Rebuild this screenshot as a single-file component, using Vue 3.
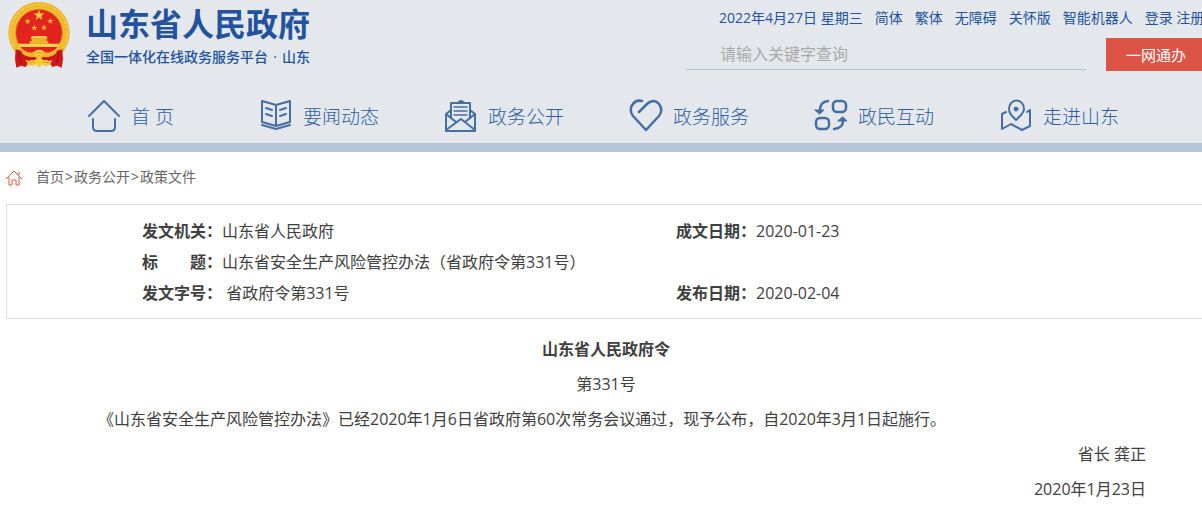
<template>
  <div class="page">
    <header class="header">
      <div class="header-top">
        <a class="brand" href="#">
          <svg class="emblem" viewBox="24 6 184 198" aria-hidden="true">
            <circle cx="116" cy="98" r="92" fill="#eab32a" />
            <circle cx="116" cy="98" r="85" fill="none" stroke="#f5c83c" stroke-width="7" stroke-dasharray="14 3" />
            <circle cx="116" cy="98" r="75" fill="none" stroke="#f2c034" stroke-width="5" />
            <circle cx="116" cy="98" r="70" fill="#e4231f" stroke="#d59a20" stroke-width="2" />
            <path d="M46 148 L78 156 L92 178 L76 201 L62 197 L48 203 L44 178 Z" fill="#d0181c" />
            <path d="M186 148 L154 156 L140 178 L156 201 L170 197 L184 203 L188 178 Z" fill="#d0181c" />
            <path d="M54 156 L64 190 M178 156 L168 190" stroke="#b01015" stroke-width="4" />
            <path :d="star(116, 46, 17)" fill="#f9cf3a" />
            <path v-for="s in smallStars" :key="s[0]" :d="star(s[0], s[1], 10)" fill="#f0b832" />
            <path d="M95 108 H138 L142 116 H91 Z" fill="#f7cd45" />
            <path d="M94 117 H139 V123 H144 V131 H88 V123 H94 Z" fill="#edb42e" />
            <path d="M55 131 H177 L173 141 H59 Z" fill="#fbd750" />
            <path d="M61 142 H171 L161 154 H71 Z" fill="#e4231f" />
            <path d="M58 140 Q78 160 98 157 Q105 149 116 150 Q127 149 134 157 Q154 160 174 140 L167 160 Q146 178 132 168 L116 173 L100 168 Q86 178 65 160 Z" fill="#efb72b" />
            <path d="M77 168 Q96 176 108 168 H124 Q136 176 155 168 L147 180 H85 Z" fill="#c9151b" />
            <circle cx="116" cy="163" r="14" fill="#f9cd3b" />
            <path d="M103 164 Q116 151 129 164 M107 172 Q116 162 125 172" fill="none" stroke="#c98516" stroke-width="2" />
            <path d="M76 179 Q96 188 108 176 H124 Q136 188 156 179 L149 195 Q132 202 124 192 L120 201 H112 L108 192 Q100 202 83 195 Z" fill="#f7c934" />
            <path d="M84 189 L104 186 M148 189 L128 186" stroke="#d48d18" stroke-width="2" />
          </svg>
          <span class="brand-text">
            <strong class="brand-name">山东省人民政府</strong>
            <span class="brand-sub"><span>全国一体化在线政务服务平台</span><span>·</span><span>山东</span></span>
          </span>
        </a>
        <div class="tools">
          <div class="top-links">
            <span>2022年4月27日 星期三</span>
            <a v-for="link in topLinks" :key="link" href="#">{{ link }}</a>
            <span><a href="#">登录</a> <a href="#">注册</a></span>
          </div>
          <form class="search" @submit.prevent>
            <input v-model="keyword" type="text" placeholder="请输入关键字查询" aria-label="请输入关键字查询" />
            <button type="button">一网通办</button>
          </form>
        </div>
      </div>

      <nav class="nav">
        <a v-for="item in navItems" :key="item.icon" class="nav-item" href="#">
          <svg class="nav-icon" viewBox="0 0 34 34" aria-hidden="true">
            <g v-if="item.icon === 'home'">
              <path d="M2 17 L17 2 L32 17" />
              <path d="M6 20 V28 Q6 32 10 32 H24 Q28 32 28 28 V20" />
            </g>
            <g v-else-if="item.icon === 'book'">
              <path d="M17 6 L3 2 V23 L17 27 L31 23 V2 Z M17 6 V27" />
              <path d="M3 26 L17 30 L31 26" />
              <path d="M7 9 L13 11 M7 15 L13 17 M21 11 L27 9 M21 17 L27 15" />
            </g>
            <g v-else-if="item.icon === 'mail'">
              <path d="M7 19 V4 H26 V19 M15 3 L17 2 L19 3" />
              <path d="M7 11 L2 15 V32 H31 V15 L26 11" />
              <path d="M2 15 L12 23 M31 15 L21 23 M2 31 L17 20 L31 31" />
              <path class="thin" d="M10 8 H23 M10 12 H23 M10 16 H23" />
            </g>
            <g v-else-if="item.icon === 'heart'" class="bold">
              <path d="M10 13 L18 5 C22 1 27 1 30 5 C33 9 33 13 30 17 L17 31 L4 17 C1 13 1 8 4 5 C6 2 9 1 13 2" />
            </g>
            <g v-else-if="item.icon === 'swap'" class="bold">
              <rect x="19" y="2" width="13" height="11" rx="4" />
              <rect x="2" y="19" width="13" height="11" rx="4" />
              <path d="M14 2 Q6 3 6 11 M20 30 Q29 29 29 22" />
              <path class="solid" d="M1 11 H10 L6 15 Z M24 22 H33 L29 18 Z" />
            </g>
            <g v-else>
              <path d="M17 21 C12 16 10 14 10 10 A7 8 0 0 1 25 10 C25 14 22 16 17 21 Z" />
              <circle class="solid" cx="17" cy="10" r="2" />
              <path d="M7 13 L3 15 V30 L12 25 L23 31 L31 27 V11 L28 13" />
            </g>
          </svg>
          <span>{{ item.label }}</span>
        </a>
      </nav>
    </header>

    <main class="main">
      <div class="crumbs">
        <svg class="crumb-icon" viewBox="0 0 16 16" aria-hidden="true">
          <path d="M0 9 L8 1 L16 9 M3 7 V15 H6 V10 H10 V15 H13 V7 M13 5 V2" />
        </svg>
        <div class="crumb-list"><a href="#">首页</a><span>&gt;</span><a href="#">政务公开</a><span>&gt;</span><a href="#">政策文件</a></div>
      </div>

      <div class="info">
        <table>
          <tbody>
            <tr>
              <th scope="row">发文机关：</th>
              <td class="wide">山东省人民政府</td>
              <th scope="row">成文日期：</th>
              <td>2020-01-23</td>
            </tr>
            <tr>
              <th scope="row">标　　题：</th>
              <td colspan="3">山东省安全生产风险管控办法（省政府令第331号）</td>
            </tr>
            <tr>
              <th scope="row">发文字号：</th>
              <td class="wide">&nbsp;省政府令第331号</td>
              <th scope="row">发布日期：</th>
              <td>2020-02-04</td>
            </tr>
          </tbody>
        </table>
      </div>

      <article class="article">
        <h1>山东省人民政府令</h1>
        <p class="center">第331号</p>
        <p class="indent">《山东省安全生产风险管控办法》已经2020年1月6日省政府第60次常务会议通过，现予公布，自2020年3月1日起施行。</p>
        <p class="right">省长 龚正</p>
        <p class="right">2020年1月23日</p>
      </article>
    </main>
  </div>
</template>

<script setup>
import { ref } from 'vue'

const keyword = ref('')

const topLinks = ['简体', '繁体', '无障碍', '关怀版', '智能机器人']

const navItems = [
  { icon: 'home', label: '首 页' },
  { icon: 'book', label: '要闻动态' },
  { icon: 'mail', label: '政务公开' },
  { icon: 'heart', label: '政务服务' },
  { icon: 'swap', label: '政民互动' },
  { icon: 'map', label: '走进山东' }
]

const smallStars = [[82, 64], [150, 63], [102, 84], [131, 83]]

// five-pointed star path around (cx, cy)
function star(cx, cy, r) {
  const points = []
  for (let i = 0; i < 10; i++) {
    const radius = i % 2 ? r * 0.4 : r
    const angle = (Math.PI / 5) * i - Math.PI / 2
    points.push(`${cx + radius * Math.cos(angle)} ${cy + radius * Math.sin(angle)}`)
  }
  return `M${points.join(' L')} Z`
}
</script>

<style>
body {
  margin: 0;
  background: #fff;
}
</style>

<style scoped>
.page {
  overflow: hidden;
  font-family: "Open Sans", "Noto Sans CJK SC", sans-serif;
  font-size: 16px;
  color: #404040;
}
a {
  color: inherit;
  text-decoration: none;
}
.header {
  background: #e4e8ed;
  border-bottom: 9px solid #b5c5d6;
  color: #22539c;
}
.header-top {
  display: flex;
  justify-content: space-between;
  height: 89px;
  margin-right: -4px;
  padding-left: 8px;
}
.brand {
  display: flex;
  align-items: flex-start;
  gap: 16px;
  padding-top: 2px;
}
.emblem {
  width: 62px;
  height: 66px;
}
.brand-text {
  display: flex;
  flex-direction: column;
  gap: 5px;
  padding-top: 4px;
}
.brand-name {
  font-size: 32px;
  line-height: 36px;
  font-weight: 700;
}
.brand-sub {
  display: flex;
  justify-content: space-between;
  font-size: 14px;
  line-height: 20px;
  font-weight: 500;
}
.tools {
  width: 520px;
}
.top-links {
  display: flex;
  gap: 12px;
  padding: 8px 0 0 33px;
  font-size: 14px;
  line-height: 20px;
  white-space: nowrap;
}
.search {
  display: flex;
  gap: 20px;
  margin-top: 10px;
}
.search input {
  flex: 1;
  min-width: 0;
  height: 32px;
  box-sizing: border-box;
  padding: 0 34px;
  border: none;
  border-bottom: 1px solid #b4c0d1;
  background: transparent;
  font-family: inherit;
  font-size: 16px;
  color: #404040;
  outline: none;
}
.search input::placeholder {
  color: #a9a9a9;
}
.search button {
  width: 100px;
  height: 33px;
  padding: 0;
  border: none;
  background: #dc5445;
  color: #fff;
  font-family: inherit;
  font-size: 15px;
  cursor: pointer;
}
.nav {
  display: flex;
  gap: 65px;
  height: 54px;
  padding-left: 87px;
  font-size: 19px;
  font-weight: 300;
  color: #2f5f9e;
}
.nav-item {
  display: flex;
  align-items: center;
  gap: 10px;
  min-width: 107px;
  white-space: nowrap;
}
.nav-icon {
  width: 34px;
  height: 34px;
  fill: none;
  stroke: #456fa3;
  stroke-width: 2;
  stroke-linecap: round;
  stroke-linejoin: round;
}
.nav-icon .bold {
  stroke-width: 2.5;
}
.nav-icon .thin {
  stroke-width: 1.5;
}
.nav-icon .solid {
  fill: #456fa3;
  stroke-width: 1;
}
.main {
  margin: 0 -4px 0 6px;
}
.crumbs {
  display: flex;
  align-items: center;
  gap: 14px;
  height: 52px;
  font-size: 14px;
  line-height: 20px;
  color: #666;
}
.crumb-list {
  display: flex;
  gap: 1px;
  padding-bottom: 2px;
}
.crumb-icon {
  width: 16px;
  height: 16px;
  fill: none;
  stroke: #d65a4c;
}
.info {
  padding: 11px 0 9px 135px;
  border: 1px solid #ddd;
}
.info table {
  width: 100%;
  border-collapse: collapse;
}
.info th,
.info td {
  height: 31px;
  padding: 0;
  line-height: 31px;
  text-align: left;
}
.info th {
  width: 80px;
  white-space: nowrap;
}
.info .wide {
  width: 454px;
}
.article {
  padding: 13px 60px 0;
  line-height: 35px;
}
.article h1,
.article p {
  margin: 0;
  font-size: 16px;
}
.article h1,
.center {
  text-align: center;
}
.indent {
  text-indent: 32px;
}
.right {
  text-align: right;
}
</style>
